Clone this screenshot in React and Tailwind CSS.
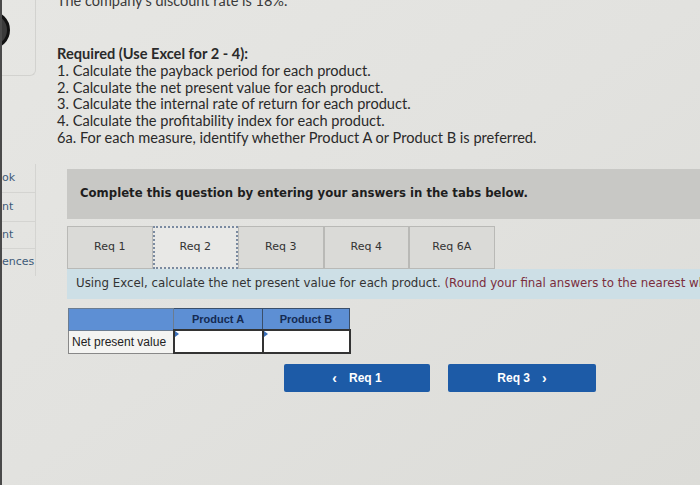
export default function App() {
  const tabs = ["Req 1", "Req 2", "Req 3", "Req 4", "Req 6A"];
  const steps = [
    "1. Calculate the payback period for each product.",
    "2. Calculate the net present value for each product.",
    "3. Calculate the internal rate of return for each product.",
    "4. Calculate the profitability index for each product.",
    "6a. For each measure, identify whether Product A or Product B is preferred.",
  ];

  return (
    <div className="w-[700px] h-[485px] overflow-hidden flex bg-gradient-to-br from-[#e6e6e3] via-[#e2e2df] to-[#dcdcd8] border-l-2 border-[#4a4a4a]">
      {/* left rail (cut off) */}
      <div className="w-[34px] shrink-0 flex flex-col overflow-hidden">
        <div className="h-[76px] flex items-start border-r border-b border-[#d2d2cf] rounded-br-md">
          <div className="mt-[11px] -ml-[30px] shrink-0 w-[38px] h-[38px] rounded-full border-[3px] border-[#111] bg-[#3a3a3a]" />
        </div>
        <div className="mt-[88px] flex flex-col border-r border-[#d4d4d1] text-[11px] text-[#3d5a78] font-['DejaVu_Sans',sans-serif]">
          <div className="h-[29px] flex items-center border-b border-[#d4d4d1]">ok</div>
          <div className="h-[29px] flex items-center border-b border-[#d4d4d1]">nt</div>
          <div className="h-[27px] flex items-center border-b border-[#d4d4d1]">nt</div>
          <div className="h-[27px] flex items-center">ences</div>
        </div>
      </div>

      {/* main */}
      <div className="flex-1 pl-[21px] font-['Lato','Open_Sans',sans-serif] text-[#2a2a2a]">
        <p className="-mt-[8px] text-[14.5px] leading-[18px] text-[#3a3a3a]">
          The company's discount rate is 18%.
        </p>
        <div className="mt-[36px] text-[14.6px] leading-[16.8px]">
          <p className="font-bold">Required (Use Excel for 2 - 4):</p>
          {steps.map((s) => (
            <p key={s}>{s}</p>
          ))}
        </div>

        <div className="mt-[22px] ml-[10px] -mr-[2px] h-[50px] bg-[#c8c8c5] flex items-center pl-[13px] font-['DejaVu_Sans',sans-serif] font-bold text-[11.7px] text-[#1e1e1e]">
          Complete this question by entering your answers in the tabs below.
        </div>

        <div className="mt-[7px] ml-[10px] font-['DejaVu_Sans',sans-serif]">
          <div className="flex h-[43px]">
            {tabs.map((t, i) => (
              <div
                key={t}
                className={
                  i === 1
                    ? "w-[85.5px] flex items-center justify-center text-[11px] text-[#333] bg-[#e8e8e6] border-2 border-dotted border-[#7a8aa0]"
                    : "w-[85.5px] flex items-center justify-center text-[11px] text-[#333] bg-[#dadad7] border border-[#b9b9b6]"
                }
              >
                {t}
              </div>
            ))}
          </div>
          <div className="h-[30px] bg-[#cddfe6] flex items-center pl-[9px] text-[11.8px] whitespace-nowrap text-[#333]">
            Using Excel, calculate the net present value for each product.&nbsp;
            <span className="text-[#7b2d3c]">(Round your final answers to the nearest whole dollar.)</span>
          </div>

          <table className="mt-[9px] ml-[1px] border-collapse font-['Liberation_Sans',sans-serif] text-[11px]">
            <thead>
              <tr className="h-[22px] bg-[#5d8fd4]">
                <th className="w-[105px] border border-[#6b7c90]" />
                <th className="w-[89px] border border-[#3b4f6a] text-[#142a52] font-bold">Product A</th>
                <th className="w-[87px] border border-[#3b4f6a] text-[#142a52] font-bold">Product B</th>
              </tr>
            </thead>
            <tbody>
              <tr className="h-[23px]">
                <td className="border border-[#888] bg-[#f4f4f2] pl-[3px] text-[#222] text-[12px]">Net present value</td>
                <td className="relative border-2 border-[#333] bg-white">
                  <span className="absolute left-0 top-0 w-0 h-0 border-y-[3px] border-y-transparent border-l-[4px] border-l-[#3a6fb8]" />
                </td>
                <td className="relative border-2 border-[#333] bg-white">
                  <span className="absolute left-0 top-0 w-0 h-0 border-y-[3px] border-y-transparent border-l-[4px] border-l-[#3a6fb8]" />
                </td>
              </tr>
            </tbody>
          </table>

          <div className="mt-[10px] ml-[217px] flex gap-[18px] font-['Liberation_Sans',sans-serif] font-bold text-[12px] text-white">
            <div className="w-[146px] h-[28px] bg-[#1d5ba7] rounded-[2px] flex items-center justify-center gap-[12px]">
              <span className="text-[14px]">&lsaquo;</span>
              <span>Req 1</span>
            </div>
            <div className="w-[148px] h-[28px] bg-[#1d5ba7] rounded-[2px] flex items-center justify-center gap-[12px]">
              <span>Req 3</span>
              <span className="text-[14px]">&rsaquo;</span>
            </div>
          </div>
        </div>
      </div>
    </div>
  );
}
